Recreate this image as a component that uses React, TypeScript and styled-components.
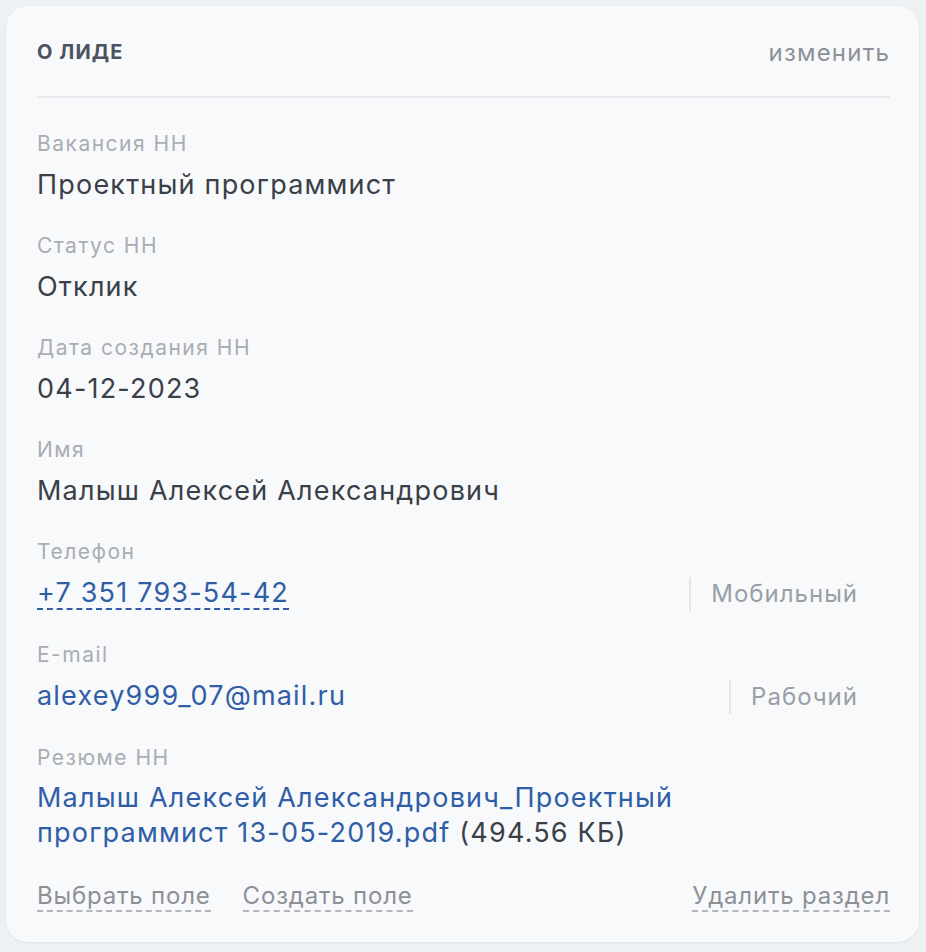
import React from 'react';
import styled, { createGlobalStyle } from 'styled-components';

const GlobalStyle = createGlobalStyle`
  html, body {
    margin: 0;
    padding: 0;
    background: #eef1f4;
  }
  body {
    font-family: Inter, "Noto Sans", "Liberation Sans", sans-serif;
    -webkit-font-smoothing: antialiased;
  }
`;

const Page = styled.div`
  padding: 6px 7px 9px 6px;
`;

const Card = styled.section`
  background: #f8f9fb;
  border-radius: 22px;
  box-shadow: 0 1px 3px rgba(20, 30, 50, 0.07);
  padding: 0 29px 30px 31px;
`;

const Header = styled.header`
  display: flex;
  align-items: center;
  justify-content: space-between;
  height: 92px;
  border-bottom: 2px solid #e6e8eb;
  padding-top: 2px;
  box-sizing: border-box;
`;

const Title = styled.h2`
  margin: 0;
  font-size: 20px;
  font-weight: 700;
  letter-spacing: 1.1px;
  color: #4b5260;
  text-transform: uppercase;
`;

const EditLink = styled.a`
  font-size: 24px;
  color: #8d9097;
  cursor: pointer;
  letter-spacing: 1.2px;
`;

const Fields = styled.div`
  display: flex;
  flex-direction: column;
  padding-top: 32px;
`;

const Field = styled.div`
  display: flex;
  flex-direction: column;
  margin-bottom: 30px;
`;

const Label = styled.div`
  font-size: 21px;
  line-height: 28px;
  color: #a9adb3;
  letter-spacing: 1.5px;
  margin-bottom: 10px;
`;

const Value = styled.div`
  font-size: 27px;
  line-height: 34px;
  color: #3a3f48;
  letter-spacing: 1.2px;
`;

const ContactRow = styled.div`
  display: flex;
  align-items: center;
  justify-content: space-between;
  height: 35px;
  padding-right: 32px;
`;

const LinkValue = styled.a<{ $dashed?: boolean }>`
  display: inline-block;
  font-size: 27px;
  line-height: 30px;
  color: #2f5ea6;
  letter-spacing: 1.2px;
  text-decoration: none;
  border-bottom: ${(p) => (p.$dashed ? '2px dashed #2f5ea6' : '2px solid transparent')};
  cursor: pointer;
`;

const Tag = styled.span`
  font-size: 24px;
  color: #9a9ea5;
  letter-spacing: 1px;
  border-left: 2px solid #e3e5e8;
  padding: 3px 0 3px 20px;
  line-height: 28px;
`;

const FileText = styled.div`
  font-size: 27px;
  line-height: 35px;
  color: #3a3f48;
  letter-spacing: 1.2px;
  max-width: 700px;
  margin-top: -2px;
`;

const FileLink = styled.a`
  color: #2f5ea6;
  text-decoration: none;
`;

const Footer = styled.footer`
  display: flex;
  align-items: center;
  gap: 32px;
  margin-top: 2px;
`;

const ActionLink = styled.a<{ $right?: boolean }>`
  font-size: 24px;
  line-height: 28px;
  color: #8d9097;
  letter-spacing: 0.8px;
  border-bottom: 2px dashed #b3b6bb;
  cursor: pointer;
  margin-left: ${(p) => (p.$right ? 'auto' : '0')};
`;

const fields = [
  { label: 'Вакансия НН', value: 'Проектный программист' },
  { label: 'Статус НН', value: 'Отклик' },
  { label: 'Дата создания НН', value: '04-12-2023' },
  { label: 'Имя', value: 'Малыш Алексей Александрович' },
];

export default function App() {
  return (
    <>
      <GlobalStyle />
      <Page>
        <Card>
          <Header>
            <Title>О лиде</Title>
            <EditLink>изменить</EditLink>
          </Header>
          <Fields>
            {fields.map((f) => (
              <Field key={f.label}>
                <Label>{f.label}</Label>
                <Value>{f.value}</Value>
              </Field>
            ))}
            <Field>
              <Label>Телефон</Label>
              <ContactRow>
                <LinkValue $dashed>+7 351 793-54-42</LinkValue>
                <Tag>Мобильный</Tag>
              </ContactRow>
            </Field>
            <Field>
              <Label>E-mail</Label>
              <ContactRow>
                <LinkValue>alexey999_07@mail.ru</LinkValue>
                <Tag>Рабочий</Tag>
              </ContactRow>
            </Field>
            <Field>
              <Label>Резюме НН</Label>
              <FileText>
                <FileLink>Малыш Алексей Александрович_Проектный программист 13-05-2019.pdf</FileLink>{' '}
                (494.56 КБ)
              </FileText>
            </Field>
          </Fields>
          <Footer>
            <ActionLink>Выбрать поле</ActionLink>
            <ActionLink>Создать поле</ActionLink>
            <ActionLink $right>Удалить раздел</ActionLink>
          </Footer>
        </Card>
      </Page>
    </>
  );
}
